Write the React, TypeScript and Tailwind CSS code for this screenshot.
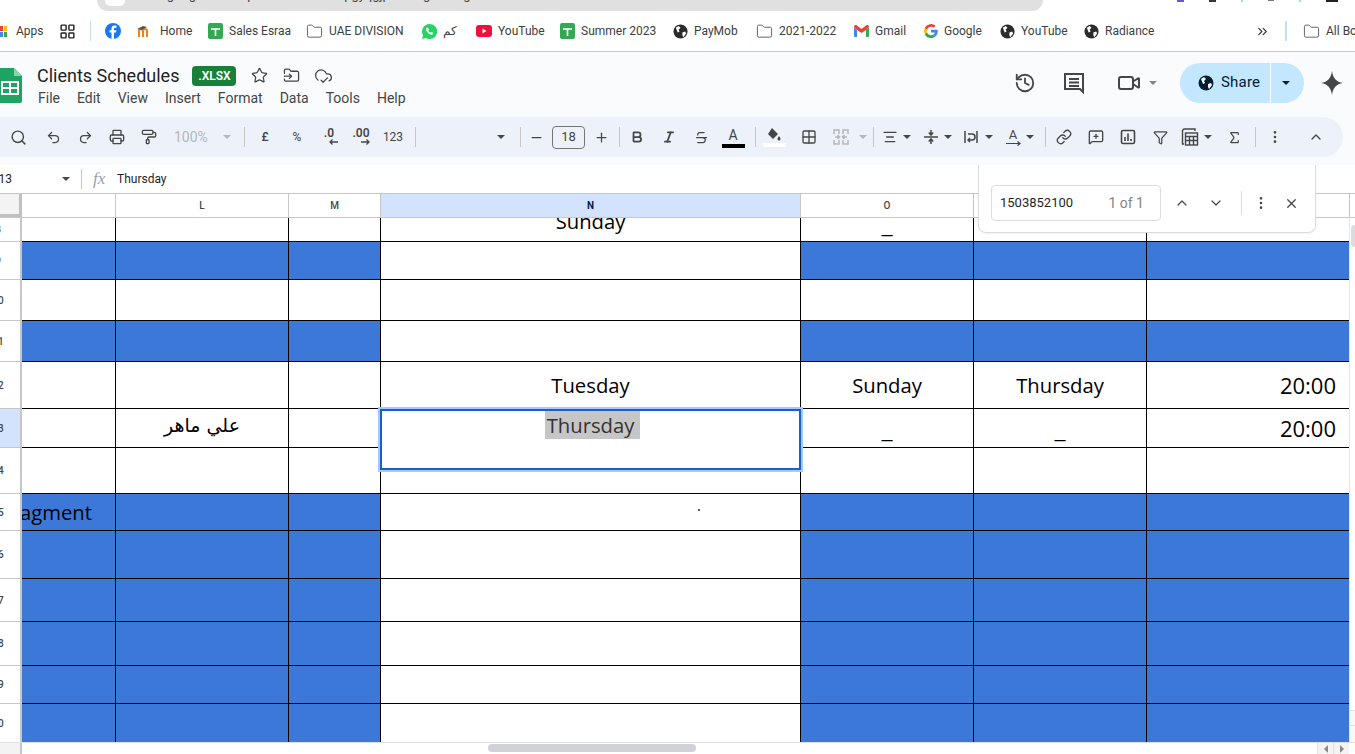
import React from 'react';
import { Star, History, Video, Search, Undo2, Redo2, Printer, PaintRoller, Minus, Plus, Bold, Italic, Strikethrough, Grid2x2, AlignCenter, Link, MessageSquarePlus, Filter, Sigma, EllipsisVertical, ChevronUp, ChevronDown, X, Folder, ChevronsRight, FolderInput, CloudCheck, LayoutGrid } from 'lucide-react';

const font = { fontFamily: 'Roboto, sans-serif' };

const Caret = ({ className = 'border-t-[#444746]' }: { className?: string }) => (
  <span className={`inline-block shrink-0 w-0 h-0 border-x-[4px] border-x-transparent border-t-[4px] ${className}`} />
);

const SheetIcon = () => (
  <svg width="15" height="16" viewBox="0 0 15 16">
    <rect width="15" height="16" rx="2" fill="#34a853" />
    <path d="M3 6h9M7.500 6v7" stroke="#fff" strokeWidth="1.600" />
  </svg>
);

const GlobeIcon = ({ size = 15, fill = '#2b2b2b' }: { size?: number; fill?: string }) => (
  <svg width={size} height={size} viewBox="0 0 16 16">
    <circle cx="8" cy="8" r="7.500" fill={fill} />
    <path d="M3 4l3-2 2 2-2 2 1 2-2 1zM10 9l3-1 1 2-3 4-1-2z" fill="#fff" />
  </svg>
);

const bookmarks = [
  { icon: <svg width="16" height="16" viewBox="0 0 16 16"><circle cx="8" cy="8" r="8" fill="#1877f2" /><path d="M9 16V9.500h2l.4-2.300H9V6c0-.7.3-1.200 1.300-1.200h1.200v-2C11 2.700 10.300 2.600 9.600 2.600 7.700 2.600 6.500 3.800 6.500 5.700v1.500H4.500v2.300h2V16z" fill="#fff" /></svg>, label: '', w: 'w-[32px]' },
  { icon: <svg width="17" height="13" viewBox="0 0 17 13"><path d="M2 12V6c0-1 1-2 2-2s2 1 2 2v6M6 6c0-1 1-2 2-2s2 1 2 2v6" fill="none" stroke="#f98012" strokeWidth="2" /><path d="M0 4l6-3 4 1-5 3z" fill="#555" /></svg>, label: 'Home', w: 'w-[71px]' },
  { icon: <SheetIcon />, label: 'Sales Esraa', w: 'w-[98px]' },
  { icon: <Folder size={17} strokeWidth={1.400} color="#5f6368" />, label: 'UAE DIVISION', w: 'w-[116px]' },
  { icon: <svg width="15" height="15" viewBox="0 0 16 16"><path d="M8 0a8 8 0 0 0-6.900 12L0 16l4.100-1.100A8 8 0 1 0 8 0z" fill="#25d366" /><path d="M5 4c-1 1-1 3 1 5s4 3 5.500 2l.5-1.500-2-1-1 .8c-1-.4-2-1.400-2.300-2.300l.8-1-1-2z" fill="#fff" /></svg>, label: 'كم', w: 'w-[54px]' },
  { icon: <svg width="16" height="12" viewBox="0 0 16 12"><rect width="16" height="12" rx="3" fill="#f00f3c" /><path d="M6.500 3.500v5l4-2.500z" fill="#fff" /></svg>, label: 'YouTube', w: 'w-[84px]' },
  { icon: <SheetIcon />, label: 'Summer 2023', w: 'w-[113px]' },
  { icon: <GlobeIcon />, label: 'PayMob', w: 'w-[83px]' },
  { icon: <Folder size={17} strokeWidth={1.400} color="#5f6368" />, label: '2021-2022', w: 'w-[98px]' },
  { icon: <svg width="15" height="12" viewBox="0 0 15 12"><path d="M0 2v9a1 1 0 0 0 1 1h2V5z" fill="#4285f4" /><path d="M15 2v9a1 1 0 0 1-1 1h-2V5z" fill="#34a853" /><path d="M0 2l3 3 4.500 3L12 5l3-3c0-2-2-2.500-3-1.500L7.500 4 3 .5C2-.5 0 0 0 2z" fill="#ea4335" /></svg>, label: 'Gmail', w: 'w-[70px]' },
  { icon: <svg width="14" height="14" viewBox="0 0 16 16"><path d="M15.700 8.200c0-.6 0-1.100-.1-1.600H8v3h4.300a3.700 3.700 0 0 1-1.600 2.400l2.600 2c1.500-1.400 2.400-3.400 2.400-5.800z" fill="#4285f4" /><path d="M8 16c2.200 0 4-.7 5.300-2l-2.600-2c-.7.500-1.600.8-2.700.8-2.100 0-3.900-1.400-4.500-3.300L.9 11.600A8 8 0 0 0 8 16z" fill="#34a853" /><path d="M3.500 9.500a4.800 4.800 0 0 1 0-3L.9 4.400a8 8 0 0 0 0 7.200z" fill="#fbbc05" /><path d="M8 3.200c1.200 0 2.200.4 3 1.200l2.300-2.300A8 8 0 0 0 .9 4.400l2.600 2.100C4.100 4.600 5.900 3.200 8 3.200z" fill="#ea4335" /></svg>, label: 'Google', w: 'w-[76px]' },
  { icon: <GlobeIcon />, label: 'YouTube', w: 'w-[84px]' },
  { icon: <GlobeIcon />, label: 'Radiance', w: 'w-[90px]' },
];

const ChromeBars = () => (
  <div className="shrink-0 bg-white">
    <div className="h-[11px] flex overflow-hidden">
      <div className="ml-[97px] w-[946px] shrink-0 h-[11px] bg-[#e0e0e0] rounded-b-[12px] flex overflow-hidden">
        <span className="ml-[8px] -mt-[5px] w-[20px] h-[11px] rounded-full bg-white shrink-0" />
        <span className="ml-[10px] -mt-[12px] text-[13px] leading-[14px] text-[#444] whitespace-nowrap">docs.google.com/spreadsheets/d/1pgyqgjp/edit?gid=0#gid=0</span>
      </div>
      <div className="ml-[134px] flex gap-[25px] items-start">
        <span className="w-[7px] h-[2px] bg-[#5b5fc7]" />
        <span className="w-[7px] h-[2px] bg-[#333]" />
        <span className="w-[2px] h-[2px] bg-[#a8d8f0]" />
        <span className="w-[6px] h-[1px] bg-[#777]" />
        <span className="w-[2px] h-[2px] bg-[#a8d8f0]" />
        <span className="w-[12px] h-[2px] bg-[#222]" />
        <span className="w-[6px] h-[2px] bg-[#9ab]" />
      </div>
    </div>
    <div className="h-[41px] flex items-center border-b border-[#c7c7c7] text-[12px] text-[#3c4043] whitespace-nowrap overflow-hidden">
      <div className="w-[105px] shrink-0 flex items-center">
        <span className="w-[8px] h-[11px] grid grid-cols-2 gap-[1px] mr-[9px] overflow-hidden -ml-[1px]">
          <i className="bg-[#ea4335]" /><i className="bg-[#fbbc05]" /><i className="bg-[#4285f4]" /><i className="bg-[#34a853]" />
        </span>
        <span>Apps</span>
        <LayoutGrid size={17} strokeWidth={2} color="#222" className="ml-[15px]" />
        <span className="ml-[14px] w-px h-[20px] bg-[#c2e0f0]" />
      </div>
      {bookmarks.map((b, i) => (
        <div key={i} className={`flex items-center gap-[6px] shrink-0 ${b.w}`}>
          {b.icon}
          <span>{b.label}</span>
        </div>
      ))}
      <ChevronsRight size={15} className="ml-[81px] shrink-0" />
      <span className="ml-[15px] w-[2px] h-[20px] bg-[#c2e0f0] shrink-0" />
      <Folder size={17} strokeWidth={1.400} color="#5f6368" className="ml-[16px] shrink-0" />
      <span className="ml-[6px]">All Bookmarks</span>
    </div>
  </div>
);

const TitleBar = () => (
  <div className="h-[65px] shrink-0 bg-[#f9fbfd] flex relative">
    <svg width="23" height="35" viewBox="0 0 23 35" className="mt-[16px] -ml-[1px] shrink-0">
      <path d="M0 0h15l8 8v25a2 2 0 0 1-2 2H0z" fill="#1ea362" />
      <path d="M15 0l8 8h-8z" fill="#8ed1b1" />
      <path d="M3 14h16v12H3zM3 20h16M11 14v12" fill="none" stroke="#fff" strokeWidth="2" />
    </svg>
    <div className="ml-[16px] flex flex-col">
      <div className="flex items-center h-[22px] mt-[12px]">
        <span className="text-[18px] text-[#1f1f1f] -ml-[1px]">Clients Schedules</span>
        <span className="ml-[13px] w-[44px] h-[20px] mt-[2px] bg-[#188038] rounded-[4px] text-white text-[12px] font-semibold flex items-center justify-center">.XLSX</span>
        <Star size={17} strokeWidth={1.800} color="#444746" className="ml-[15px]" />
        <FolderInput size={17} strokeWidth={1.800} color="#444746" className="ml-[15px]" />
        <CloudCheck size={19} strokeWidth={1.600} color="#444746" className="ml-[14px]" />
      </div>
      <div className="flex gap-[17px] text-[14px] text-[#444746] mt-[2px]">
        <span>File</span><span>Edit</span><span>View</span><span>Insert</span><span>Format</span><span>Data</span><span>Tools</span><span>Help</span>
      </div>
    </div>
    <div className="ml-auto flex items-center h-[61px]">
      <History size={22} strokeWidth={2} color="#444746" />
      <svg width="22" height="22" viewBox="0 0 22 22" className="ml-[27px]" fill="none" stroke="#444746" strokeWidth="2">
        <path d="M2 2h18v18l-3-3H2zM6 7h10M6 10.500h10M6 14h10" />
      </svg>
      <Video size={24} strokeWidth={2} color="#444746" className="ml-[32px]" />
      <span className="ml-[8px] flex"><Caret className="border-t-[#80868b]" /></span>
      <div className="ml-[23px] w-[124px] h-[40px] rounded-full bg-[#c2e7ff] flex items-center text-[#001d35]">
        <div className="w-[91px] h-full flex items-center border-r border-[#f9fbfd] pl-[18px] gap-[7px]">
          <GlobeIcon size={16} fill="#001d35" />
          <span className="text-[15px] tracking-[0.2px]">Share</span>
        </div>
        <span className="ml-[11px] flex"><Caret className="border-t-[#001d35]" /></span>
      </div>
      <svg width="22" height="24" viewBox="0 0 22 24" className="ml-[17px] mr-[12px]"><path d="M11 0c1 7 4 11 11 12-7 1-10 5-11 12-1-7-4-11-11-12 7-1 10-5 11-12z" fill="#444746" /></svg>
    </div>
  </div>
);

const Sep = ({ ml }: { ml: string }) => (
  <span className={`w-px h-[20px] bg-[#c7c7c7] shrink-0 ${ml}`} />
);

const Slot = ({ w = 'w-[32px]', ml = '', children }: { w?: string; ml?: string; children: React.ReactNode }) => (
  <span className={`${w} ${ml} shrink-0 flex items-center justify-center`}>{children}</span>
);

const DecimalBtn = ({ text, dir }: { text: string; dir: 'left' | 'right' }) => (
  <span className="flex flex-col items-center text-[12px] font-semibold leading-[12px] -mt-[2px]">
    {text}
    <svg width="9" height="6" viewBox="0 0 9 6" fill="none" stroke="#444746" strokeWidth="1.300" className="ml-[8px]">
      <path d={dir === 'left' ? 'M9 3H1M3.500 .5L1 3l2.500 2.500' : 'M0 3h8M5.500 .5L8 3 5.500 5.500'} />
    </svg>
  </span>
);

const Toolbar = () => {
  const ic = { size: 16, strokeWidth: 2, color: '#444746' };
  return (
    <div className="h-[48px] shrink-0 bg-[#f9fbfd]">
      <div className="h-[40px] -ml-[20px] w-[1363px] pl-[22px] rounded-full bg-[#edf2fa] flex items-center text-[#444746] whitespace-nowrap">
        <Slot><Search {...ic} size={17} /></Slot>
        <Slot ml="ml-[3px]"><Undo2 {...ic} size={15} /></Slot>
        <Slot><Redo2 {...ic} size={15} /></Slot>
        <Slot><Printer {...ic} /></Slot>
        <Slot><PaintRoller {...ic} /></Slot>
        <span className="ml-[9px] w-[37px] text-[14px] text-[#b4b7bb]">100%</span>
        <span className="ml-[12px] flex"><Caret className="border-t-[#b4b7bb]" /></span>
        <Sep ml="ml-[13px]" />
        <Slot ml="ml-[4px]"><span className="text-[12px] font-medium">£</span></Slot>
        <Slot><span className="text-[12px]">%</span></Slot>
        <Slot><DecimalBtn text=".0" dir="left" /></Slot>
        <Slot><DecimalBtn text=".00" dir="right" /></Slot>
        <Slot><span className="text-[12px]">123</span></Slot>
        <Sep ml="ml-[6px]" />
        <span className="ml-[81px] flex"><Caret /></span>
        <Sep ml="ml-[15px]" />
        <Slot w="w-[31px]"><Minus {...ic} size={15} /></Slot>
        <span className="w-[33px] h-[23px] rounded-[4px] border border-[#747775] text-[13px] flex items-center justify-center shrink-0">18</span>
        <Slot w="w-[31px]" ml="ml-[1px]"><Plus {...ic} size={15} /></Slot>
        <Sep ml="ml-[2px]" />
        <Slot ml="ml-[1px]"><Bold {...ic} size={14} strokeWidth={3} /></Slot>
        <Slot><Italic {...ic} size={14} strokeWidth={3} /></Slot>
        <Slot><Strikethrough {...ic} size={15} /></Slot>
        <Slot>
          <span className="w-[23px] flex flex-col items-center">
            <span className="text-[14px] leading-[16px]">A</span>
            <span className="w-[23px] h-[4px] bg-black mt-[1px]" />
          </span>
        </Slot>
        <Sep ml="ml-[6px]" />
        <Slot ml="ml-[2px]">
          <span className="w-[23px] flex flex-col items-center">
            <svg width="16" height="15" viewBox="0 0 16 15"><path d="M6 1l6 6-5 5-5-5zM13 9c1 1.500 1.500 2.200 1.500 3a1.500 1.500 0 0 1-3 0c0-.8.5-1.500 1.500-3z" fill="#444746" /></svg>
            <span className="w-[23px] h-[4px] bg-white mt-[1px]" />
          </span>
        </Slot>
        <Slot ml="ml-[3px]"><Grid2x2 {...ic} /></Slot>
        <Slot>
          <svg width="16" height="16" viewBox="0 0 16 16" fill="none" stroke="#b4b7bb" strokeWidth="1.500">
            <path d="M1 5V1h5v4M10 5V1h5v4M1 11v4h5v-4M10 11v4h5v-4M2 8h4M4.500 6l2 2-2 2M14 8h-4M11.500 6l-2 2 2 2" />
          </svg>
        </Slot>
        <span className="ml-[2px] flex"><Caret className="border-t-[#b4b7bb]" /></span>
        <Sep ml="ml-[6px]" />
        <Slot w="w-[24px]" ml="ml-[4px]"><AlignCenter {...ic} /></Slot>
        <span className="ml-[1px] flex"><Caret /></span>
        <Slot w="w-[24px]" ml="ml-[8px]">
          <svg width="16" height="16" viewBox="0 0 16 16" fill="none" stroke="#444746" strokeWidth="1.500">
            <path d="M1 8h14M8 1v4.500M5.800 3.500L8 6l2.200-2.500M8 15v-4.500M5.800 12.500L8 10l2.200 2.500" />
          </svg>
        </Slot>
        <span className="ml-[1px] flex"><Caret /></span>
        <Slot w="w-[24px]" ml="ml-[7px]">
          <svg width="14" height="16" viewBox="0 0 14 16" fill="none" stroke="#444746" strokeWidth="1.500">
            <path d="M1 2v12M13 2v12M4 5h4a2.500 2.500 0 0 1 0 6H4M6 9l-2 2 2 2" />
          </svg>
        </Slot>
        <span className="ml-[2px] flex"><Caret /></span>
        <Slot w="w-[24px]" ml="ml-[8px]">
          <span className="flex flex-col items-center">
            <span className="text-[13px] leading-[12px]">A</span>
            <svg width="15" height="5" viewBox="0 0 15 5" fill="none" stroke="#444746" strokeWidth="1.200"><path d="M0 2.500h14M11.500 .5L14 2.500 11.500 4.500" /></svg>
          </span>
        </Slot>
        <span className="ml-[1px] flex"><Caret /></span>
        <Sep ml="ml-[11px]" />
        <Slot ml="ml-[2px]"><Link {...ic} /></Slot>
        <Slot><MessageSquarePlus {...ic} /></Slot>
        <Slot>
          <svg width="16" height="16" viewBox="0 0 16 16" fill="none" stroke="#444746" strokeWidth="1.600">
            <rect x="1.500" y="1.500" width="13" height="13" rx="1.500" />
            <path d="M5 12V8M8 12V4.500M11 12v-2" />
          </svg>
        </Slot>
        <Slot><Filter {...ic} size={15} /></Slot>
        <Slot w="w-[28px]">
          <svg width="18" height="18" viewBox="0 0 18 18" fill="none" stroke="#444746" strokeWidth="1.400">
            <path d="M3 16H1.500V2.500L3 1h11v2" />
            <rect x="4.500" y="5" width="12" height="12" />
            <path d="M4.500 8.500h12M4.500 12.500h12M8.500 8.500V17M12.500 8.500V17" />
          </svg>
        </Slot>
        <span className="flex"><Caret /></span>
        <Slot ml="ml-[6px]"><Sigma {...ic} size={15} /></Slot>
        <Sep ml="ml-[5px]" />
        <Slot ml="ml-[3px]"><EllipsisVertical {...ic} /></Slot>
        <Slot ml="ml-[9px]"><ChevronUp {...ic} /></Slot>
      </div>
    </div>
  );
};

const FormulaBar = () => (
  <div className="h-[29px] shrink-0 bg-white flex items-center border-b border-[#c7c7c7] text-[12px] text-[#1f1f1f]">
    <span className="-ml-[10px] w-[72px]">N13</span>
    <Caret />
    <span className="ml-[11px] w-px h-[20px] bg-[#c7c7c7]" />
    <span className="ml-[11px] w-[24px] text-[17px] leading-[20px] italic text-[#9aa0a6]" style={{ fontFamily: '"Liberation Serif", serif' }}>fx</span>
    <span>Thursday</span>
  </div>
);

const colW = ['w-[94px]', 'w-[173px]', 'w-[92px]', 'w-[420px]', 'w-[173px]', 'w-[173px]', 'w-[203px]'];
const headers = ['', 'L', 'M', 'N', 'O', '', ''];

const ColumnHeader = () => (
  <div className="h-[24px] shrink-0 flex bg-white border-b border-[#c7c7c7] text-[10px] font-medium text-[#444746]">
    <div className="w-[22px] shrink-0 bg-[#f3f3f3] border-r-[3px] border-b-[3px] border-[#c0c0c0]" />
    {headers.map((h, i) => (
      <div key={i} className={`${colW[i]} shrink-0 flex items-center justify-center border-r border-[#c7c7c7] ${h === 'N' ? 'bg-[#d3e3fd] text-[#041e49] font-bold' : ''}`}>{h}</div>
    ))}
  </div>
);

type Row = { n: number; h: string; blue?: boolean; cells?: Record<number, React.ReactNode> };

const Time = () => <span className="block text-right pr-[13px] text-[22px] leading-[24px]">20:00</span>;
const Dash = () => <span className="block text-[27px] leading-[24px] font-light">_</span>;

const rows: Row[] = [
  { n: 8, h: 'h-[24px]', cells: { 3: <span className="block -mt-[17px] leading-[24px]">Sunday</span>, 4: <span className="block -mt-[14px] text-[27px] leading-[24px] font-light">_</span> } },
  { n: 9, h: 'h-[38px]', blue: true },
  { n: 10, h: 'h-[41px]' },
  { n: 11, h: 'h-[41px]', blue: true },
  { n: 12, h: 'h-[47px]', cells: { 3: 'Tuesday', 4: 'Sunday', 5: 'Thursday', 6: <Time /> } },
  { n: 13, h: 'h-[39px]', cells: { 1: <span className="block -mt-[6px] text-[19px]" dir="rtl" style={{ fontFamily: '"DejaVu Sans", sans-serif' }}>علي ماهر</span>, 4: <Dash />, 5: <Dash />, 6: <Time /> } },
  { n: 14, h: 'h-[46px]' },
  { n: 15, h: 'h-[37px]', blue: true, cells: { 0: <span className="block text-left -ml-[44px] whitespace-nowrap">Managment</span> } },
  { n: 16, h: 'h-[48px]', blue: true },
  { n: 17, h: 'h-[43px]', blue: true },
  { n: 18, h: 'h-[44px]', blue: true },
  { n: 19, h: 'h-[38px]', blue: true },
  { n: 20, h: 'h-[39px]', blue: true },
];

const Grid = () => (
  <div className="flex-1 min-h-0 overflow-hidden relative" style={{ fontFamily: '"Open Sans", sans-serif' }}>
    {rows.map((r) => (
      <div key={r.n} className={`${r.h} flex`}>
        <div className={`w-[22px] shrink-0 border-r-[2px] border-b border-[#c7c7c7] overflow-hidden flex items-center text-[10px] ${r.n === 13 ? 'bg-[#d3e3fd]' : 'bg-white'}`} style={font}>
          <span className="-ml-[25px] w-[46px] shrink-0 text-center text-[#444746] font-medium">{r.n}</span>
        </div>
        {colW.map((w, c) => (
          <div key={c} className={`${w} shrink-0 border-r border-b border-black flex items-center justify-center overflow-hidden text-[20.25px] text-black ${r.blue && c !== 3 ? 'bg-[#3c78d8]' : 'bg-white'}`}>
            <span className="block w-full text-center">{r.cells?.[c]}</span>
          </div>
        ))}
      </div>
    ))}
    {/* active cell editor */}
    <div className="absolute left-[380px] top-[191px] w-[421px] h-[61px] bg-white border-2 border-[#1a5fd0] outline-2 outline-[#a8c7fa] flex justify-center">
      <span className="ml-[4px] h-[28px] pl-[2px] pr-[6px] bg-[#c6c6c6] text-[20.25px] leading-[28px] text-[#333]">Thursday</span>
    </div>
    <div className="absolute left-[698px] top-[291px] w-[2px] h-[2px] bg-[#223] rounded-full" />
    {/* vertical scrollbar */}
    <div className="absolute right-0 top-0 bottom-0 w-[6px] bg-white border-l border-[#e5e5e5] flex flex-col">
      <div className="mt-[7px] ml-[1px] h-[22px] bg-[#dadce0] rounded-l-[4px]" />
      <div className="mt-auto h-[16px] bg-[#f8f8f8] border-y border-[#e0e0e0]" />
      <div className="h-[16px] bg-[#f8f8f8]" />
    </div>
  </div>
);

const BottomBar = () => (
  <div className="h-[12px] shrink-0 flex bg-white border-t border-[#e0e0e0]">
    <div className="w-[22px] bg-[#f3f3f3] border-r-[2px] border-[#c7c7c7]" />
    <div className="ml-[466px] mt-[1px] w-[208px] h-[8px] rounded-full bg-[#d0d2d6]" />
    <div className="ml-auto flex mr-[6px] h-full">
      <div className="w-[16px] flex items-center justify-center border-l border-[#e0e0e0] bg-[#f3f3f3]"><span className="w-0 h-0 border-y-[4px] border-y-transparent border-r-[4px] border-r-[#8a8a8a]" /></div>
      <div className="w-[16px] flex items-center justify-center border-l border-[#e0e0e0] bg-[#f3f3f3]"><span className="w-0 h-0 border-y-[4px] border-y-transparent border-l-[4px] border-l-[#8a8a8a]" /></div>
    </div>
  </div>
);

const FindBar = () => (
  <div className="absolute left-[978px] top-[165px] w-[338px] h-[68px] bg-white border border-t-0 border-[#dadce0] rounded-b-[8px] flex items-center text-[#444746] shadow-[0_1px_2px_rgba(0,0,0,0.05)]" style={font}>
    <div className="ml-[12px] mt-[9px] w-[170px] h-[36px] border border-[#dadce0] rounded-[4px] flex items-center text-[13px] bg-white">
      <span className="ml-[8px] text-[#1f1f1f]">1503852100</span>
      <span className="ml-auto mr-[16px] text-[14px] text-[#80868b]">1 of 1</span>
    </div>
    <div className="mt-[9px] flex items-center">
      <ChevronUp size={16} strokeWidth={1.800} className="ml-[13px]" />
      <ChevronDown size={16} strokeWidth={1.800} className="ml-[18px]" />
      <span className="ml-[17px] w-px h-[24px] bg-[#dadce0]" />
      <EllipsisVertical size={16} strokeWidth={2} className="ml-[11px]" />
      <X size={15} strokeWidth={2} className="ml-[15px]" />
    </div>
  </div>
);

export default function App() {
  return (
    <div className="h-[754px] w-[1355px] overflow-hidden flex flex-col relative bg-white" style={font}>
      <ChromeBars />
      <TitleBar />
      <Toolbar />
      <FormulaBar />
      <ColumnHeader />
      <Grid />
      <BottomBar />
      <FindBar />
    </div>
  );
}
